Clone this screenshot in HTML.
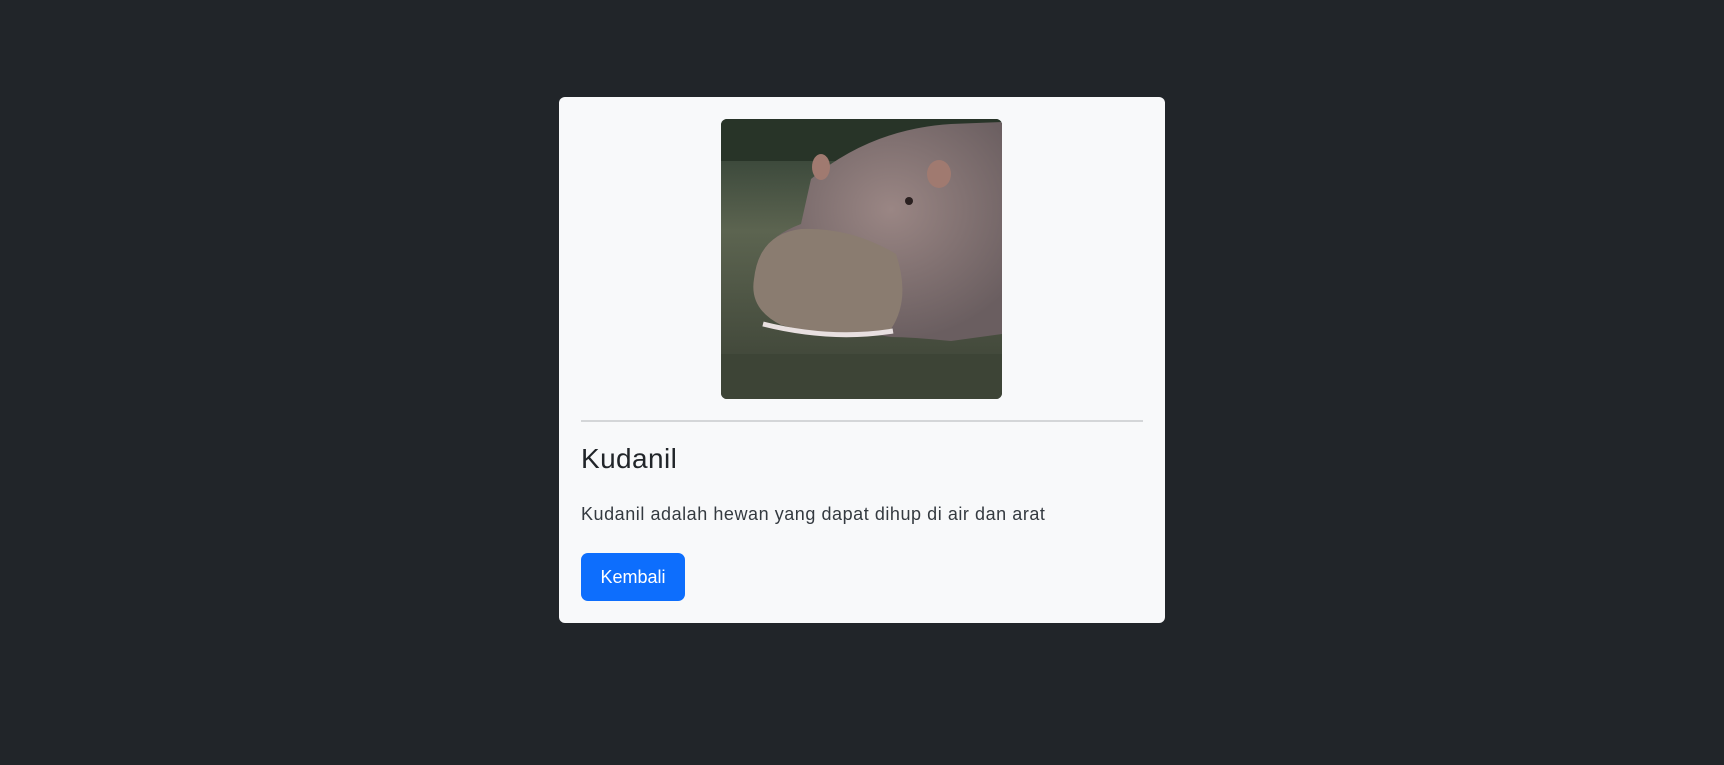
<!DOCTYPE html>
<html><head><style>
body{margin:0;background:#212529;width:1724px;height:765px;overflow:hidden;font-family:"Liberation Sans",sans-serif}
.card{position:absolute;left:559px;top:97px;width:606px;height:526px;background:#f8f9fa;border-radius:6px}
.img{position:absolute;left:162px;top:22px;width:281px;height:280px;border-radius:6px;overflow:hidden}
hr{position:absolute;left:22px;top:323px;width:562px;margin:0;border:0;border-top:2px solid #d4d6d8}
h1{position:absolute;left:22px;top:346px;margin:0;font-weight:400;font-size:28px;letter-spacing:0.4px;color:#212529}
p{position:absolute;left:22px;top:407px;margin:0;font-size:18px;letter-spacing:0.55px;color:#343a40}
.btn{position:absolute;left:22px;top:456px;width:104px;height:48px;background:#0d6efd;border-radius:7px;color:#fff;font-size:18px;line-height:48px;text-align:center}
</style></head><body>
<div class="card">
<div class="img"><svg width="281" height="280" viewBox="0 0 281 280">
<defs><linearGradient id="w" x1="0" y1="0" x2="0" y2="1"><stop offset="0" stop-color="#2a3a30"/><stop offset=".4" stop-color="#5c6450"/><stop offset="1" stop-color="#3a4034"/></linearGradient>
<radialGradient id="h" cx=".55" cy=".4" r=".6"><stop offset="0" stop-color="#9a8684"/><stop offset="1" stop-color="#6a5e60"/></radialGradient></defs>
<rect width="281" height="280" fill="url(#w)"/>
<rect width="281" height="42" fill="#283428"/>
<path d="M90 60 Q150 10 230 5 L281 3 L281 215 L230 222 Q190 218 170 218 L60 200 Q30 180 35 150 Q40 120 80 105 Z" fill="url(#h)"/>
<path d="M33 160 Q38 115 80 110 Q130 108 175 135 Q190 180 170 210 Q120 222 60 206 Q28 190 33 160Z" fill="#8a7c70"/>
<path d="M42 205 Q110 222 172 212" stroke="#e8e0e0" stroke-width="5" fill="none"/>
<ellipse cx="100" cy="48" rx="9" ry="13" fill="#a07a70"/><ellipse cx="218" cy="55" rx="12" ry="14" fill="#a07a70"/>
<circle cx="188" cy="82" r="4" fill="#2a2020"/>
<rect y="235" width="281" height="45" fill="#3d4436"/>
</svg></div>
<hr>
<h1>Kudanil</h1>
<p>Kudanil adalah hewan yang dapat dihup di air dan arat</p>
<div class="btn">Kembali</div>
</div>
</body></html>
